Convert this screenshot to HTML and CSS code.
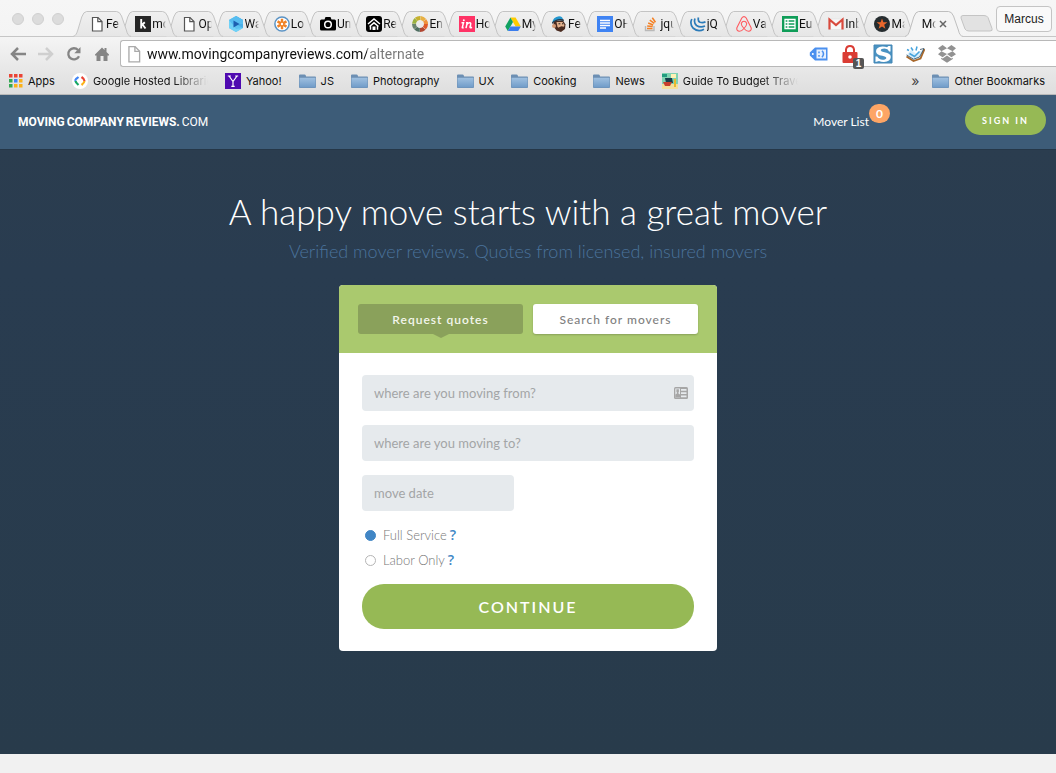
FILE: index.html
```html
<!DOCTYPE html>
<html lang="en">
<head>
<meta charset="utf-8">
<meta name="viewport" content="width=device-width, initial-scale=1">
<title>Moving Company Reviews</title>
<link rel="stylesheet" href="styles.css">
</head>
<body>
<svg class="defs" aria-hidden="true">
  <defs>
    <linearGradient id="folder-fill" x1="0" y1="0" x2="0" y2="1"><stop offset="0" stop-color="#9fc0e0"/><stop offset="1" stop-color="#6f9bc8"/></linearGradient>
    <linearGradient id="tab-fill" x1="0" y1="0" x2="0" y2="1"><stop offset="0" stop-color="#f0f0f0"/><stop offset="1" stop-color="#e6e6e6"/></linearGradient>
  </defs>
  <symbol id="folder" viewBox="0 0 17 16"><path d="M0 2.500q0-1 1-1h4.500q1 0 1.300 1l.3.900h8.900q1 0 1 1V14q0 1-1 1H1q-1 0-1-1z" fill="#6c8fb3"/><path d="M.5 4.800h16V14q0 .5-.5.500H1q-.5 0-.5-.5z" fill="url(#folder-fill)"/></symbol>
  <symbol id="doc" viewBox="0 0 16 16"><path d="M3.500 1.500h5.500l4 4v9.500h-9.500z" fill="#fff" stroke="currentColor" stroke-width="1.200"/><path d="M8.800 1.500v4.200h4.200" fill="none" stroke="currentColor" stroke-width="1.200"/></symbol>
  <symbol id="tab-shape" viewBox="0 0 60 26" preserveAspectRatio="none"><path d="M0 25.500C3 25 4 22 5 19L9 6Q11 .5 14 .5H45Q48 .5 50 5L55 19C56 23 57 25 60 25.500" fill="url(#tab-fill)" stroke="#c3c3c3"/></symbol>
  <symbol id="tab-shape-active" viewBox="0 0 60 26" preserveAspectRatio="none"><path d="M0 25.500C3 25 4 22 5 19L9 6Q11 .5 14 .5H45Q48 .5 50 5L55 19C56 23 57 25 60 25.500V26H0z" fill="#f4f4f4"/><path d="M0 25.500C3 25 4 22 5 19L9 6Q11 .5 14 .5H45Q48 .5 50 5L55 19C56 23 57 25 60 25.500" fill="none" stroke="#bdbdbd"/></symbol>
</svg>

<header class="browser">
  <div class="strip">
    <div class="lights"><i></i><i></i><i></i></div>
    <nav class="tabs" aria-label="Open tabs">
      <a class="tab" href="#"><svg class="shape"><use href="#tab-shape"/></svg><svg class="fav" viewBox="0 0 16 16"><use href="#doc"/></svg><span>Fe</span></a>
      <a class="tab" href="#"><svg class="shape"><use href="#tab-shape"/></svg><svg class="fav" viewBox="0 0 16 16"><path d="M0 0h16v16H0z" fill="#262626"/><path d="M6.200 3v9.500M6.500 9.300l3.300-3M7.500 8.500l3 4" stroke="#fff" stroke-width="1.900" fill="none"/></svg><span>mo</span></a>
      <a class="tab" href="#"><svg class="shape"><use href="#tab-shape"/></svg><svg class="fav" viewBox="0 0 16 16"><use href="#doc"/></svg><span>Op</span></a>
      <a class="tab" href="#"><svg class="shape"><use href="#tab-shape"/></svg><svg class="fav" viewBox="0 0 16 16"><path d="M8 0l7 4v8l-7 4-7-4V4z" fill="#5cc3f0"/><path d="M8 0l7 4v8L8 8z" fill="#49aee6"/><path d="M1 4l7-4 7 4v4H1z" fill="#57bdf0"/><path d="M1 4v8l7 4 7-4-7 1z" fill="#70d2f7"/><path d="M5.500 4.500v7l6-3.500z" fill="#1c5fb0"/></svg><span>Wa</span></a>
      <a class="tab" href="#"><svg class="shape"><use href="#tab-shape"/></svg><svg class="fav" viewBox="0 0 16 16"><circle cx="8" cy="8" r="7.100" fill="#fff" stroke="#5b93c4" stroke-width="1.500"/><g fill="none" stroke="#f08226" stroke-width="2.400"><path d="M8 2.800v10.400M3.500 5.400l9 5.200M3.500 10.600l9-5.200"/></g><circle cx="8" cy="8" r="1.200" fill="#fff"/></svg><span>Lo</span></a>
      <a class="tab" href="#"><svg class="shape"><use href="#tab-shape"/></svg><svg class="fav" viewBox="0 0 16 16"><path d="M1.500 3.500h3L5.500 1h5l1 2.500h3q1.500 0 1.500 1.500v8q0 1.500-1.500 1.500h-13Q0 14.500 0 13V5q0-1.500 1.500-1.500z"/><circle cx="8" cy="8.500" r="3.300" fill="none" stroke="#fff" stroke-width="1.500"/></svg><span>Un</span></a>
      <a class="tab" href="#"><svg class="shape"><use href="#tab-shape"/></svg><svg class="fav" viewBox="0 0 16 16"><rect width="16" height="16" rx="3"/><path d="M2 8l6-5 6 5M3.500 10.500L8 6.800l4.500 3.700M4.500 10v3.800M11.500 10v3.800" fill="none" stroke="#fff" stroke-width="1.500"/><path d="M6.500 10.500h3v3.500h-3z" fill="#fff"/></svg><span>Re</span></a>
      <a class="tab" href="#"><svg class="shape"><use href="#tab-shape"/></svg><svg class="fav" viewBox="0 0 16 16"><g fill="none" stroke-width="4" stroke-dasharray="4.500 33.200"><circle cx="8" cy="8" r="6" stroke="#df5a2b"/><circle cx="8" cy="8" r="6" stroke="#b04632" stroke-dashoffset="-4.700"/><circle cx="8" cy="8" r="6" stroke="#4f6e61" stroke-dashoffset="-9.400"/><circle cx="8" cy="8" r="6" stroke="#69836e" stroke-dashoffset="-14.100"/><circle cx="8" cy="8" r="6" stroke="#9bb23f" stroke-dashoffset="-18.800"/><circle cx="8" cy="8" r="6" stroke="#c5b02e" stroke-dashoffset="-23.500"/><circle cx="8" cy="8" r="6" stroke="#e8b043" stroke-dashoffset="-28.200"/><circle cx="8" cy="8" r="6" stroke="#f0913c" stroke-dashoffset="-32.900"/></g></svg><span>En</span></a>
      <a class="tab" href="#"><svg class="shape"><use href="#tab-shape"/></svg><svg class="fav" viewBox="0 0 16 16"><path d="M0 0h16v16H0z" fill="#ff3366"/><path d="M2.500 6.800h2l-1.200 4.500q-.2 1 1.300.2M7 6.800h1.200L7 12.200M7.800 8.500q1.800-2 3.200-1.700 1.200.4.600 2.200l-.6 2q-.1 1.200 2 .2" fill="none" stroke="#fff" stroke-width="1.500"/><circle cx="4.800" cy="4.200" r="1" fill="#fff"/></svg><span>Ho</span></a>
      <a class="tab" href="#"><svg class="shape"><use href="#tab-shape"/></svg><svg class="fav" viewBox="0 0 16 16"><path d="M5.400 1.500h5.200l5.200 9h-5.200z" fill="#fc0"/><path d="M5.400 1.500L8 6 2.800 15 .2 10.500z" fill="#11a261"/><path d="M5.400 10.500h10.400L13.200 15H2.800z" fill="#3b7ded"/></svg><span>My</span></a>
      <a class="tab" href="#"><svg class="shape"><use href="#tab-shape"/></svg><svg class="fav" viewBox="0 0 16 16"><path d="M2.500 5l9.500-.5 2.500 4-.5 4.500-4 3-4.500-1.500-3-4z" fill="#4a2b20"/><path d="M5.500 6h6l2 3-1 3-3 1-3-2z" fill="#e4b28e"/><path d="M1 7Q2 1 8 .2q4 0 4 3.800Q6 3 1 7z" fill="#2497cf"/><path d="M1 8q4-5 12-3l-.5-1.800Q5 2 1 6.500z" fill="#263746"/><circle cx="3" cy="10" r="2" fill="#d49a76"/><path d="M7.500 11.500l3-1.300 3.500.8-1 2-4 .5z" fill="#4a2b20"/><path d="M7.500 7.800h1.800M11 7.800h1.300" stroke="#222"/></svg><span>Fe</span></a>
      <a class="tab" href="#"><svg class="shape"><use href="#tab-shape"/></svg><svg class="fav" viewBox="0 0 16 16"><path d="M0 0h16v16H0z" fill="#3f83f3"/><path d="M3 4.500h10M3 7h10M3 9.500h10M3 12h6" stroke="#fff" stroke-width="1.300"/></svg><span>OH</span></a>
      <a class="tab" href="#"><svg class="shape"><use href="#tab-shape"/></svg><svg class="fav" viewBox="0 0 16 16"><path d="M2.500 10v4.500h8.500V10" fill="none" stroke="#b9b9b9" stroke-width="1.400"/><path d="M4 12.500h5.500M4.200 9.900l5.500.7M5.200 7l5 2M6.800 4.200l4.500 3.200M9.300 1.800l3.200 4.500" stroke="#f48024" stroke-width="1.500"/></svg><span>jqu</span></a>
      <a class="tab" href="#"><svg class="shape"><use href="#tab-shape"/></svg><svg class="fav" viewBox="0 0 16 16"><g fill="none" stroke="#2b7bb9" stroke-width="1.700"><path d="M1.800 3Q-.5 8 3 12q5 4.500 11 1.200M5 2.500Q3.500 7 6.500 9.500q4 2.500 8.500.5M8.500 1.500q-1 3.500 1.500 4.800 3 1 5.500-.5"/></g></svg><span>jQ</span></a>
      <a class="tab" href="#"><svg class="shape"><use href="#tab-shape"/></svg><svg class="fav" viewBox="0 0 16 16"><path d="M8 12.500Q4.800 9 5.400 7.300 6.100 5.300 8 5.300t2.600 2Q11.200 9 8 12.500 5.500 15.500 3 15.200.2 14.500.9 11.800L5.800 2Q6.800.6 8 .6T10.200 2l4.900 9.800q.7 2.700-2.100 3.400-2.500.3-5-2.700z" fill="none" stroke="#ff5a5f" stroke-width="1.100"/></svg><span>Va</span></a>
      <a class="tab" href="#"><svg class="shape"><use href="#tab-shape"/></svg><svg class="fav" viewBox="0 0 16 16"><path d="M0 0h16v16H0z" fill="#0f9d58"/><path d="M3 3.500h10v9H3zM3 6.500h10M3 9.500h10M6 3.500v9" fill="none" stroke="#fff" stroke-width="1.300"/></svg><span>Eu</span></a>
      <a class="tab" href="#"><svg class="shape"><use href="#tab-shape"/></svg><svg class="fav" viewBox="0 0 16 16"><path d="M1 3h14v10.500H1z" fill="#f7f7f7" stroke="#ddd" stroke-width=".5"/><path d="M1.500 13.500v-10L8 9l6.500-5.500v10" fill="none" stroke="#d94a3d" stroke-width="2.200"/></svg><span>Inb</span></a>
      <a class="tab" href="#"><svg class="shape"><use href="#tab-shape"/></svg><svg class="fav" viewBox="0 0 16 16"><circle cx="8" cy="8" r="8" fill="#252c2f"/><path d="M8 2.500l1.400 3.800h4l-3.200 2.500 1.200 4L8 10.500l-3.400 2.300 1.200-4-3.200-2.500h4z" fill="#e8672c"/></svg><span>Ma</span></a>
      <a class="tab active" href="#" aria-current="page"><svg class="shape"><use href="#tab-shape-active"/></svg><span>Mo</span><svg class="close" viewBox="0 0 8 8"><path d="M1 1l6 6M7 1L1 7" stroke="#666" stroke-width="1.500"/></svg></a>
    </nav>
    <button class="newtab" aria-label="New tab"><svg viewBox="0 0 33 17"><path d="M3 .5h21q3 0 4 2l4 11q1 2.500-2 2.500H9q-3 0-4-2L1 3Q.5.5 3 .5z" fill="#e2e2e2" stroke="#c4c4c4"/></svg></button>
    <button class="profile">Marcus</button>
  </div>

  <div class="toolbar">
    <div class="nav-buttons">
      <button aria-label="Back"><svg viewBox="0 0 16 16"><path d="M8 2L2 8l6 6M2.500 8H16" fill="none" stroke="#858585" stroke-width="2.500"/></svg></button>
      <button aria-label="Forward"><svg viewBox="0 0 16 16"><path d="M8 2l6 6-6 6M13.500 8H0" fill="none" stroke="#cfcfcf" stroke-width="2.500"/></svg></button>
      <button aria-label="Reload"><svg viewBox="0 0 16 16"><path d="M13 10.200A5.600 5.600 0 1 1 12 4" fill="none" stroke="#858585" stroke-width="2.300"/><path d="M14.500 1v6.200H8.300z" fill="#858585"/></svg></button>
      <button aria-label="Home"><svg viewBox="0 0 16 16"><path d="M8 1.500l2.500 2.500V2h2v4L15 8.500v1h-1.500V15H9.500v-5h-3v5H2.500V9.500H1v-1z" fill="#858585"/></svg></button>
    </div>
    <div class="omnibox">
      <svg class="page-icon" viewBox="0 0 16 16"><use href="#doc"/></svg>
      <input class="url" type="text" aria-label="Address" value="www.movingcompanyreviews.com/alternate">
      <div class="extensions">
        <button aria-label="Shopping tag"><svg viewBox="0 0 20 20"><path d="M6 3.500h12.500v13H6L.8 11.500v-3z" fill="#4b90ef"/><path d="M7.500 5.500h9.500v9H7.500z" fill="#e7f1fe"/><circle cx="3.800" cy="10" r="1" fill="#fff"/><path d="M10 7.500v1.800M10 11v1.800M13 6.800q3 3.200 0 6.400" fill="none" stroke="#4b90ef" stroke-width="1.500"/></svg></button>
        <button aria-label="Privacy lock, 1"><svg viewBox="0 0 20 20"><path d="M5 9V5.500Q5.500 2 9 2t4 3.500V9" fill="none" stroke="#da3c34" stroke-width="2"/><rect x="1.500" y="8" width="15" height="11" rx="1" fill="#da3c34"/><circle cx="9" cy="13" r="1.800" fill="#fff"/></svg><span class="count">1</span></button>
        <button aria-label="Stylish"><svg viewBox="0 0 20 20"><path d="M1 1h18v18H1z" fill="#4a92c2" stroke="#4286b5"/><path d="M17.500 2v5.500h-1.300Q15 4.800 11.500 4.600 8 4.700 7.700 6.300q.2 1.300 3.800 2 6.300 1 6.300 4.700-.3 4.500-6.800 5-2.800.1-5-1L2.500 18v-5.500h1.800q1.400 3 5.200 3.200 3.600-.1 3.800-1.800-.1-1.400-4-2.100Q3 10.800 3 7.200 3.300 3 9.300 2.500q2.700-.1 4.700.8L15.500 2z" fill="#fff"/></svg></button>
        <button aria-label="Notebook"><svg viewBox="0 0 20 20"><path d="M1.500 11l4.500-5 5 3.500L19 5l-3.500 9-6.500 2.500z" fill="#d8eefb"/><path d="M1.500 12.500L8.500 17l7-2.500L19.500 5" fill="none" stroke="#a8672a" stroke-width="1.800"/><path d="M1.500 11l7 4.200 6-2.200L19 4.500l-4 1" fill="none" stroke="#2f4a60" stroke-width=".8"/><path d="M2 5.500l2 1M6 3.500l2 3M12 2.500l-1 4M4.500 9.500l5 3 5-5" fill="none" stroke="#45a3dd" stroke-width="1.500"/></svg></button>
        <button aria-label="Dropbox"><svg viewBox="0 0 20 20"><path d="M5.600 1L10 4.200 14.400 1 19 4.300 15.600 7.200 19 10.200l-4.600 3L10 10l-4.400 3.200-4.600-3 3.400-3L1 4.300zM10 4.200L4.400 7.200 10 10l5.600-2.800zM10 11.500l4.300 3 1.500-.8v1.300L10 18.800 4.200 15v-1.300l1.500.8z" fill="#929292" fill-rule="evenodd"/></svg></button>
      </div>
    </div>
  </div>

  <nav class="bookmarks" aria-label="Bookmarks">
    <a href="#" class="apps"><svg viewBox="0 0 14 14"><path d="M0 0h3.500v3.500H0zM5 0h3.500v3.500H5zM10 0h3.500v3.500H10z" fill="#ea4335"/><path d="M0 5h3.500v3.500H0zM0 10h3.500v3.500H0z" fill="#34a853"/><path d="M5 5h3.500v3.500H5z" fill="#4285f4"/><path d="M10 5h3.500v3.500H10zM5 10h3.500v3.500H5zM10 10h3.500v3.500H10z" fill="#fbb119"/></svg>Apps</a>
    <a href="#"><svg viewBox="0 0 16 16"><circle cx="8" cy="8" r="8" fill="#fff"/><g fill="none" stroke-width="2.200"><path d="M6.500 4L4.200 5.800Q3 7 3.500 8" stroke="#4285f4"/><path d="M3.500 8q.2 1.500 3 4" stroke="#16a765"/><path d="M9.500 4q3 2 3 4" stroke="#ea4335"/><path d="M12.500 8q-.2 2-3 4" stroke="#fbb119"/></g></svg><span class="fade">Google Hosted Libraries</span></a>
    <a href="#"><svg viewBox="0 0 16 16"><path d="M0 0h16v16H0z" fill="#4f09b0"/><path d="M4 3l4 5.500L12 3M8 8v5.500M2.800 3h3M10.200 3h3M6.300 13.300h3.400" fill="none" stroke="#fff" stroke-width="1.200"/></svg>Yahoo!</a>
    <a href="#"><svg class="folder"><use href="#folder"/></svg>JS</a>
    <a href="#"><svg class="folder"><use href="#folder"/></svg>Photography</a>
    <a href="#"><svg class="folder"><use href="#folder"/></svg>UX</a>
    <a href="#"><svg class="folder"><use href="#folder"/></svg>Cooking</a>
    <a href="#"><svg class="folder"><use href="#folder"/></svg>News</a>
    <a href="#"><svg viewBox="0 0 16 16"><path d="M0 0h16v16H0z" fill="#7fd3b2"/><path d="M0 11h16v5H0z" fill="#f4df9c"/><path d="M3 5h7l1 5H4z" fill="#173e4a"/><path d="M9 1h5v4H9z" fill="#fff1b5"/><path d="M1 9h9l-2 4H3z" fill="#c83f2c"/><path d="M12 6h2v8h-2z" fill="#e9b92d"/><path d="M0 1h5v3H0z" fill="#239d80"/></svg><span class="fade">Guide To Budget Travel</span></a>
    <button class="more" aria-label="More bookmarks">»</button>
    <a href="#"><svg class="folder"><use href="#folder"/></svg>Other Bookmarks</a>
  </nav>
</header>

<header class="site-nav">
  <a class="logo" href="#"><b>MOVING</b><b>COMPANY</b><b>REVIEWS.</b><span>COM</span></a>
  <a class="mover-list" href="#">Mover List<span class="badge">0</span></a>
  <button class="sign-in">SIGN IN</button>
</header>

<main class="hero">
  <h1>A happy move starts with a great mover</h1>
  <p class="lead">Verified mover reviews. Quotes from licensed, insured movers</p>
  <section class="card">
    <div class="switch">
      <button class="mode selected" aria-pressed="true">Request quotes</button>
      <button class="mode" aria-pressed="false">Search for movers</button>
    </div>
    <form class="quote">
      <div class="field">
        <input type="text" aria-label="Moving from" placeholder="where are you moving from?">
        <svg class="contact" viewBox="0 0 14 12"><rect width="14" height="12" rx="1.500" fill="#a6a6a6"/><path d="M1.300 1.500H6v9H1.300zM7 2h5.500v1.800H7zM7 5.200h5.500V7H7zM7 8.400h5.500v1.800H7z" fill="#e6eaed"/><path d="M2.400 2.300h2.500v2.500l-.5.800v1l1.600 1v2.900H1.300V7.600l1.600-1v-1l-.5-.8z" fill="#a6a6a6"/></svg>
      </div>
      <div class="field"><input type="text" aria-label="Moving to" placeholder="where are you moving to?"></div>
      <div class="field date"><input type="text" aria-label="Move date" placeholder="move date"></div>
      <div class="options">
        <div class="option"><input type="radio" name="service" id="full" checked><label for="full">Full Service</label><a href="#" aria-label="About full service">?</a></div>
        <div class="option"><input type="radio" name="service" id="labor"><label for="labor">Labor Only</label><a href="#" aria-label="About labor only">?</a></div>
      </div>
      <button class="continue" type="submit">CONTINUE</button>
    </form>
  </section>
</main>
<footer class="foot"></footer>
</body>
</html>
```
FILE: styles.css
```css
* { box-sizing: border-box; }

body {
  margin: 0;
  min-height: 100vh;
  display: flex;
  flex-direction: column;
  font-family: Lato, "Liberation Sans", sans-serif;
  background: #f1f1f1;
}

a { color: inherit; text-decoration: none; }
button { font: inherit; border: 0; padding: 0; background: none; cursor: pointer; }
.defs { position: absolute; width: 0; height: 0; }

/* Browser frame */
.browser {
  font-family: Inter, Roboto, sans-serif;
  font-size: 12px;
  color: #111;
  background: linear-gradient(#f6f6f6, #f4f4f4 38px, #dedede);
  border-bottom: 1px solid #b9b9b9;
}

.strip {
  display: flex;
  height: 37px;
  border-bottom: 1px solid #c6c6c6;
}

.lights {
  display: flex;
  gap: 8px;
  padding: 13px 9px 0 12px;
}
.lights i {
  width: 12px;
  height: 12px;
  border-radius: 50%;
  background: #dcdcdc;
  border: 1px solid #d0d0d0;
}

.tabs {
  flex: 1;
  min-width: 0;
  display: flex;
  padding-top: 11px;
}
.tab {
  position: relative;
  flex: 1 1 0;
  min-width: 0;
  height: 26px;
  display: flex;
  align-items: center;
  padding-left: 16px;
}
.tab .shape {
  position: absolute;
  left: 0;
  top: 0;
  width: calc(100% + 12px);
  height: 26px;
}
.tab .fav {
  position: relative;
  flex: none;
  width: 16px;
  height: 16px;
  color: #555;
}
.tab span {
  position: relative;
  flex: none;
  width: 14px;
  margin-left: 1px;
  overflow: hidden;
  white-space: nowrap;
  font-family: Roboto, sans-serif;
  mask-image: linear-gradient(90deg, #000 70%, transparent);
}
.tab:nth-child(1) { z-index: 19; }
.tab:nth-child(2) { z-index: 18; }
.tab:nth-child(3) { z-index: 17; }
.tab:nth-child(4) { z-index: 16; }
.tab:nth-child(5) { z-index: 15; }
.tab:nth-child(6) { z-index: 14; }
.tab:nth-child(7) { z-index: 13; }
.tab:nth-child(8) { z-index: 12; }
.tab:nth-child(9) { z-index: 11; }
.tab:nth-child(10) { z-index: 10; }
.tab:nth-child(11) { z-index: 9; }
.tab:nth-child(12) { z-index: 8; }
.tab:nth-child(13) { z-index: 7; }
.tab:nth-child(14) { z-index: 6; }
.tab:nth-child(15) { z-index: 5; }
.tab:nth-child(16) { z-index: 4; }
.tab:nth-child(17) { z-index: 3; }
.tab:nth-child(18) { z-index: 2; }
.tab.active { z-index: 20; }
.close { position: relative; width: 8px; height: 8px; margin-left: 3px; }

.newtab { margin: 0 3px 0 9px; width: 33px; padding-top: 10px; }
.newtab svg { display: block; width: 33px; height: 17px; }
.profile {
  height: 26px;
  width: 56px;
  margin: 6px 4px 0 0;
  border: 1px solid #c4c4c4;
  border-radius: 4px;
  background: #f9f9f9;
  font-family: "Liberation Sans", sans-serif;
  color: #222;
}

.toolbar { display: flex; padding-top: 3px; }
.nav-buttons {
  display: flex;
  align-items: center;
  gap: 12px;
  padding: 0 10px;
}
.nav-buttons button, .nav-buttons svg { display: block; width: 16px; height: 16px; }
.omnibox {
  flex: 1;
  min-width: 0;
  display: flex;
  align-items: center;
  height: 27px;
  padding: 0 99px 0 4px;
  background: #fff;
  border: 1px solid #b8b8b8;
  border-right: 0;
  border-radius: 3px 0 0 3px;
}
.page-icon { width: 18px; height: 18px; color: #aaa; }
.url {
  flex: 1;
  min-width: 0;
  margin-left: 4px;
  padding: 0;
  border: 0;
  outline: 0;
  font: 14px Roboto, sans-serif;
  color: transparent;
  background: linear-gradient(90deg, #111 220px, #777 220px);
  background-clip: text;
  -webkit-background-clip: text;
}
.extensions { display: flex; gap: 12px; }
.extensions button { position: relative; }
.extensions svg { display: block; width: 20px; height: 20px; }
.count {
  position: absolute;
  right: -3px;
  bottom: -5px;
  width: 11px;
  font: bold 10px/11px "Liberation Sans", sans-serif;
  color: #fff;
  background: #555;
  border-radius: 2px;
}

.bookmarks {
  display: flex;
  align-items: center;
  gap: 17px;
  height: 27px;
  padding: 0 11px 0 9px;
  white-space: nowrap;
  font-size: 11px;
}
.bookmarks a { display: flex; align-items: center; gap: 5px; }
.bookmarks svg { flex: none; width: 16px; height: 16px; }
.bookmarks .apps svg { width: 14px; height: 14px; }
.bookmarks .folder { width: 17px; }
.fade {
  width: 115px;
  overflow: hidden;
  mask-image: linear-gradient(90deg, #000 70%, transparent);
}
.more { margin-left: auto; margin-right: -4px; font-size: 14px; color: #444; }

/* Site */
.site-nav {
  display: flex;
  align-items: center;
  height: 54px;
  padding: 0 10px 4px 18px;
  background: #3d5c78;
  color: #fff;
}
.logo {
  display: flex;
  gap: 2px;
  margin-right: auto;
  padding-top: 3px;
  font: 12px Roboto, sans-serif;
}
.mover-list {
  position: relative;
  margin-right: 96px;
  padding-top: 3px;
  font-size: 12px;
}
.badge {
  position: absolute;
  left: 100%;
  top: -7px;
  width: 21px;
  border-radius: 10px;
  background: #fda565;
  font-weight: 700;
  line-height: 19px;
  text-align: center;
}
.sign-in {
  width: 81px;
  height: 30px;
  border-radius: 15px;
  background: #96b955;
  color: #fff;
  font-size: 9px;
  font-weight: 700;
  letter-spacing: 2px;
}

.hero {
  flex: 1;
  padding: 38px 16px 102px;
  background: linear-gradient(#2b3d4f, #293c50 20%, #283b4b);
  border-top: 1px solid #253748;
  text-align: center;
}
h1 {
  margin: 0;
  font-size: 35px;
  line-height: 46px;
  font-weight: 300;
  color: #fff;
}
.lead {
  margin: 5px 0 22px;
  font-size: 18px;
  line-height: 24px;
  font-weight: 300;
  color: #4a739c;
}
.card {
  max-width: 378px;
  margin: 0 auto;
  border-radius: 4px;
  background: #fff;
  overflow: hidden;
}
.switch {
  display: flex;
  gap: 10px;
  padding: 19px;
  background: #aac96e;
}
.mode {
  position: relative;
  flex: 1;
  height: 30px;
  border-radius: 3px;
  background: #fff;
  box-shadow: 0 1px 2px rgba(0, 0, 0, .2);
  color: #808080;
  font-size: 12px;
  font-weight: 500;
  letter-spacing: 1px;
}
.mode.selected { background: #8aa15b; color: #f3f6ec; box-shadow: none; font-weight: 600; }
.mode.selected::after {
  content: "";
  position: absolute;
  left: 50%;
  top: 100%;
  margin-left: -8px;
  border: 8px solid transparent;
  border-top: 4px solid #8aa15b;
  border-bottom: 0;
}
.quote {
  display: flex;
  flex-direction: column;
  gap: 14px;
  padding: 22px 23px;
}
.field { position: relative; display: flex; }
.field input {
  width: 100%;
  height: 36px;
  padding: 0 12px;
  border: 0;
  border-radius: 4px;
  background: #e6eaed;
  font: 13px Lato, sans-serif;
  color: #555;
}
.field input::placeholder { color: #a3a5a6; opacity: 1; }
.date { width: 152px; }
.contact { position: absolute; right: 6px; top: 12px; width: 14px; height: 12px; }
.options {
  display: flex;
  flex-direction: column;
  gap: 5px;
  padding-left: 3px;
}
.option {
  display: flex;
  align-items: center;
  height: 20px;
  font-size: 13px;
  font-weight: 300;
  color: #777;
}
.option input {
  appearance: none;
  width: 11px;
  height: 11px;
  margin: 0 7px 0 0;
  border: 1px solid #b5b5b5;
  border-radius: 50%;
}
.option input:checked { background: #4186c5; border-color: #4186c5; }
.option a { margin-left: 3px; font: 600 14px/18px "Open Sans", sans-serif; color: #4186c5; }
.continue {
  height: 45px;
  border-radius: 22px;
  background: #96b955;
  color: #fff;
  font-size: 16px;
  font-weight: 600;
  letter-spacing: 2px;
}
.foot { height: 19px; background: #f1f1f1; }
```
